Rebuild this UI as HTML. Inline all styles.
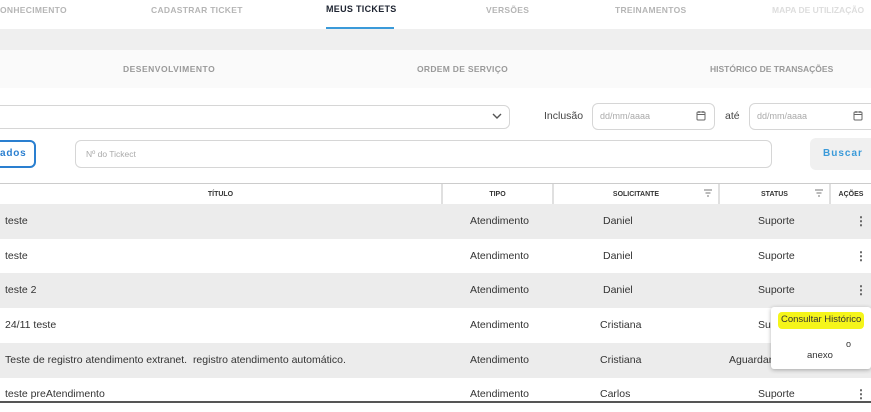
<!DOCTYPE html>
<html><head><meta charset="utf-8"><style>
*{box-sizing:border-box;margin:0;padding:0}
body{width:871px;height:403px;overflow:hidden;background:#fff;font-family:"Liberation Sans",sans-serif;position:relative;color:#444}
.a{position:absolute;white-space:nowrap}
.nav{font-size:8.5px;font-weight:bold;letter-spacing:.3px;color:#b5b5b5}
.inp{position:absolute;border:1px solid #d6d6d6;border-radius:6px;background:#fff}
.ph{font-size:9px;color:#aaa}
.th{position:absolute;top:184px;height:21px;font-size:7px;font-weight:bold;color:#333;text-align:center;line-height:21px;border-right:2px solid #e0e0e0}
.row{position:absolute;left:0;width:871px;height:35px;font-size:10.5px;color:#333;line-height:35px}
.row span{position:absolute;white-space:nowrap}
.dots{font-size:12px;font-weight:bold;color:#555}
</style></head><body>
<div class="a" style="left:0;top:0;width:871px;height:29px;background:#fff"></div>
<div class="a nav" style="left:0;top:5px">ONHECIMENTO</div>
<div class="a nav" style="left:151px;top:5px">CADASTRAR TICKET</div>
<div class="a nav" style="left:326px;top:4px;color:#1d2330;font-size:9px">MEUS TICKETS</div>
<div class="a" style="left:326px;top:27px;width:68px;height:2px;background:#3a9ad9"></div>
<div class="a nav" style="left:486px;top:5px">VERSÕES</div>
<div class="a nav" style="left:615px;top:5px">TREINAMENTOS</div>
<div class="a nav" style="left:772px;top:5px;color:#ddd;letter-spacing:0">MAPA DE UTILIZAÇÃO</div>
<div class="a" style="left:0;top:29px;width:871px;height:21px;background:#efefef"></div>
<div class="a" style="left:0;top:50px;width:871px;height:38px;background:#fafafa"></div>
<div class="a nav" style="left:123px;top:64px;color:#999;letter-spacing:.5px">DESENVOLVIMENTO</div>
<div class="a nav" style="left:417px;top:64px;color:#999;letter-spacing:.3px">ORDEM DE SERVIÇO</div>
<div class="a nav" style="left:710px;top:64px;color:#999;letter-spacing:0">HISTÓRICO DE TRANSAÇÕES</div>

<div class="inp" style="left:-10px;top:105px;width:520px;height:24px"></div>
<svg class="a" style="left:492px;top:112px" width="10" height="8"><path d="M1 2l4 4 4-4" stroke="#555" stroke-width="1.4" fill="none"/></svg>
<div class="a" style="left:544px;top:110px;font-size:10.5px;color:#444">Inclusão</div>
<div class="inp" style="left:592px;top:103px;width:123px;height:27px"></div>
<div class="a ph" style="left:600px;top:111px">dd/mm/aaaa</div>
<svg class="a" style="left:696px;top:110px" width="10" height="11"><rect x="1" y="2" width="8" height="8" rx="1" fill="none" stroke="#666"/><path d="M1 4.5h8M3 1v2M7 1v2" stroke="#666"/></svg>
<div class="a" style="left:725px;top:110px;font-size:10.5px;color:#444">até</div>
<div class="inp" style="left:749px;top:103px;width:130px;height:27px"></div>
<div class="a ph" style="left:757px;top:111px">dd/mm/aaaa</div>
<svg class="a" style="left:853px;top:110px" width="10" height="11"><rect x="1" y="2" width="8" height="8" rx="1" fill="none" stroke="#666"/><path d="M1 4.5h8M3 1v2M7 1v2" stroke="#666"/></svg>

<div class="a" style="left:-10px;top:140px;width:46px;height:28px;border:2px solid #2a7fd0;border-radius:6px"></div>
<div class="a" style="left:0;top:148px;font-size:10px;font-weight:bold;color:#2a7fd0;letter-spacing:.8px">ados</div>
<div class="inp" style="left:75px;top:140px;width:697px;height:28px"></div>
<div class="a" style="left:86px;top:149px;font-size:8.5px;color:#aaa">Nº do Tickect</div>
<div class="a" style="left:810px;top:138px;width:70px;height:32px;background:#f0f0f0;border-radius:6px"></div>
<div class="a" style="left:823px;top:148px;font-size:10px;font-weight:bold;color:#3a9ad9;letter-spacing:1px">Buscar</div>

<div class="a" style="left:0;top:183px;width:871px;height:23px;border-top:1px solid #ccc;border-bottom:1px solid #ccc;background:#fff"></div>
<div class="th" style="left:0;width:443px">TÍTULO</div>
<div class="th" style="left:443px;width:111px">TIPO</div>
<div class="th" style="left:554px;width:166px">SOLICITANTE</div>
<div class="th" style="left:720px;width:111px">STATUS</div>
<div class="th" style="left:831px;width:40px;border:none">AÇÕES</div>
<svg class="a" style="left:703px;top:189px" width="10" height="8"><path d="M1 1h8M2.5 4h5M4 7h2" stroke="#777"/></svg>
<svg class="a" style="left:814px;top:189px" width="10" height="8"><path d="M1 1h8M2.5 4h5M4 7h2" stroke="#777"/></svg>

<div class="row" style="top:204px;background:#ececec"><span style="left:5px">teste</span><span style="left:470px">Atendimento</span><span style="left:603px">Daniel</span><span style="left:758px">Suporte</span><span class="dots" style="left:855px">⋮</span></div>
<div class="row" style="top:239px"><span style="left:5px">teste</span><span style="left:470px">Atendimento</span><span style="left:603px">Daniel</span><span style="left:758px">Suporte</span><span class="dots" style="left:855px">⋮</span></div>
<div class="row" style="top:273px;background:#ececec"><span style="left:5px">teste 2</span><span style="left:470px">Atendimento</span><span style="left:603px">Daniel</span><span style="left:758px">Suporte</span><span class="dots" style="left:855px">⋮</span></div>
<div class="row" style="top:308px"><span style="left:5px">24/11 teste</span><span style="left:470px">Atendimento</span><span style="left:600px">Cristiana</span><span style="left:758px">Suporte</span></div>
<div class="row" style="top:343px;background:#ececec"><span style="left:5px">Teste de registro atendimento extranet.&nbsp; registro atendimento automático.</span><span style="left:470px">Atendimento</span><span style="left:600px">Cristiana</span><span style="left:729px">Aguardando</span></div>
<div class="row" style="top:377px"><span style="left:5px">teste preAtendimento</span><span style="left:470px">Atendimento</span><span style="left:600px">Carlos</span><span style="left:758px">Suporte</span><span class="dots" style="left:855px">⋮</span></div>
<div class="a" style="left:0;top:401px;width:871px;height:2px;background:#555"></div>

<div class="a" style="left:771px;top:307px;width:100px;height:62px;background:#fff;box-shadow:0 1px 4px rgba(0,0,0,.3);border-radius:3px"></div>
<div class="a" style="left:778px;top:312px;width:86px;height:17px;background:#f5f51a;border-radius:4px"></div>
<div class="a" style="left:781px;top:314px;font-size:9.5px;color:#333">Consultar Histórico</div>
<div class="a" style="left:846px;top:339px;font-size:9px;color:#333">o</div>
<div class="a" style="left:807px;top:350px;font-size:9.5px;color:#333">anexo</div>
</body></html>
